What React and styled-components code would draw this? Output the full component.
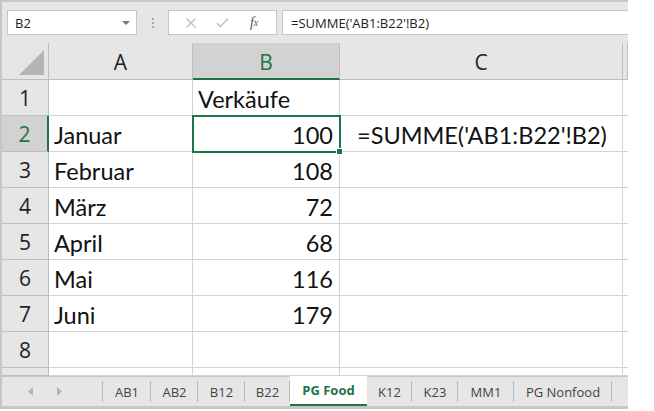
import React from "react";
import styled, { createGlobalStyle, css } from "styled-components";

const Global = createGlobalStyle`
  html, body { margin: 0; padding: 0; background: #ffffff; }
  body { width: 654px; height: 411px; overflow: hidden; }
`;

const GREEN = "#217346";
const GRID = "#d4d4d4";
const UI = `"Open Sans", "Noto Sans", "Liberation Sans", sans-serif`;
const CELL = `Lato, "Liberation Sans", sans-serif`;

const Page = styled.div`
  display: flex;
  width: 654px;
  height: 411px;
  background: #fff;
`;

const Frame = styled.div`
  width: 626px;
  height: 405px;
  border: 2px solid #c6c6c6;
  border-right: none;
  display: flex;
  flex-direction: column;
  background: #fff;
  overflow: hidden;
`;

const Toolbar = styled.div`
  height: 41px;
  flex: none;
  background: #e6e6e6;
  display: flex;
  align-items: flex-start;
  padding: 8px 0 0 5px;
  box-sizing: border-box;
  font-family: ${UI};
`;

const NameBox = styled.div`
  width: 130px;
  height: 25px;
  box-sizing: border-box;
  background: #fff;
  border: 1px solid #c6c6c6;
  display: flex;
  align-items: center;
  justify-content: space-between;
  padding: 0 6px 0 7px;
  font-size: 13px;
  color: #222;
`;

const Caret = styled.span`
  width: 0;
  height: 0;
  border-left: 4px solid transparent;
  border-right: 4px solid transparent;
  border-top: 4px solid #777;
  margin-top: 1px;
`;

const Dots = styled.div`
  width: 31px;
  height: 25px;
  display: flex;
  flex-direction: column;
  align-items: center;
  justify-content: center;
  gap: 2px;
  & > i {
    width: 2px;
    height: 2px;
    background: #a6a6a6;
    display: block;
  }
`;

const FxBox = styled.div`
  width: 109px;
  height: 25px;
  box-sizing: border-box;
  background: #fff;
  border: 1px solid #c6c6c6;
  display: flex;
  align-items: center;
  justify-content: space-around;
  padding: 0 6px;
  margin-right: 5px;
`;

const FxItem = styled.span`
  width: 22px;
  display: flex;
  justify-content: center;
  align-items: center;
  color: ${p => (p.$dark ? "#555" : "#bdbdbd")};
  font-family: ${p => (p.$serif ? `"Liberation Serif", serif` : UI)};
  font-style: ${p => (p.$serif ? "italic" : "normal")};
  font-size: ${p => (p.$serif ? "14px" : "13px")};
`;

const Sub = styled.span`
  font-size: 10px;
`;

const Formula = styled.div`
  flex: 1;
  height: 25px;
  box-sizing: border-box;
  background: #fff;
  border: 1px solid #c6c6c6;
  border-right: none;
  display: flex;
  align-items: center;
  padding-left: 8px;
  font-size: 13px;
  color: #222;
  white-space: nowrap;
`;

const Grid = styled.div`
  flex: none;
  display: grid;
  grid-template-columns: 47px 144px 147px 283px 5px;
  grid-template-rows: 37px repeat(8, 36px) 8px;
  font-family: ${CELL};
`;

const Corner = styled.div`
  background: #e6e6e6;
  border-right: 1px solid #bdbdbd;
  border-bottom: 1px solid #bdbdbd;
  position: relative;
  &::after {
    content: "";
    position: absolute;
    right: 4px;
    bottom: 4px;
    width: 0;
    height: 0;
    border-left: 25px solid transparent;
    border-bottom: 25px solid #b4b4b4;
  }
`;

const ColHead = styled.div`
  background: ${p => (p.$sel ? "#d2d2d2" : "#e6e6e6")};
  color: ${p => (p.$sel ? GREEN : "#222")};
  border-right: 1px solid #bdbdbd;
  border-bottom: ${p => (p.$sel ? `2px solid ${GREEN}` : "1px solid #bdbdbd")};
  display: flex;
  align-items: center;
  justify-content: center;
  font-family: ${UI};
  font-size: 21px;
  padding-top: 2px;
  box-sizing: border-box;
`;

const RowHead = styled.div`
  background: ${p => (p.$sel ? "#d2d2d2" : "#e6e6e6")};
  color: ${p => (p.$sel ? GREEN : "#222")};
  border-right: ${p => (p.$sel ? `2px solid ${GREEN}` : "1px solid #bdbdbd")};
  border-bottom: 1px solid #bdbdbd;
  display: flex;
  align-items: center;
  justify-content: center;
  font-family: ${UI};
  font-size: 21px;
  box-sizing: border-box;
`;

const Cell = styled.div`
  border-right: 1px solid ${GRID};
  border-bottom: 1px solid ${GRID};
  display: flex;
  align-items: center;
  justify-content: ${p => (p.$num ? "flex-end" : "flex-start")};
  padding: 2px 6px 0 ${p => (p.$indent ? 17 : 5)}px;
  font-size: 23.5px;
  color: #111;
  white-space: nowrap;
  box-sizing: border-box;
  position: relative;
  ${p =>
    p.$active &&
    css`
      outline: 2px solid ${GREEN};
      outline-offset: -1px;
      z-index: 1;
    `}
`;

const Handle = styled.span`
  position: absolute;
  right: -4px;
  bottom: -4px;
  width: 5px;
  height: 5px;
  background: ${GREEN};
  border: 1px solid #fff;
`;

const TabBar = styled.div`
  flex: 1;
  display: flex;
  align-items: stretch;
  background: #e6e6e6;
  border-top: 1px solid #c6c6c6;
  border-bottom: 1px solid #c6c6c6;
  font-family: ${UI};
  font-size: 13px;
  color: #444;
`;

const Nav = styled.div`
  width: 101px;
  display: flex;
  align-items: center;
  padding-left: 26px;
  gap: 22px;
  box-sizing: border-box;
  border-right: 1px solid #b8b8b8;
  margin: 4px 0;
  & svg { display: block; }
`;

const Tab = styled.div`
  display: flex;
  align-items: center;
  justify-content: center;
  width: ${p => p.$w}px;
  box-sizing: border-box;
  ${p =>
    p.$active
      ? css`
          background: #fff;
          color: ${GREEN};
          font-weight: 700;
          margin-top: -1px;
          border-bottom: 2px solid ${GREEN};
        `
      : css`
          position: relative;
          &::after {
            content: "";
            position: absolute;
            right: 0;
            top: 4px;
            bottom: 4px;
            width: 1px;
            background: #b8b8b8;
          }
        `}
`;

const tabs = [
  ["AB1", 48],
  ["AB2", 47],
  ["B12", 47],
  ["B22", 45],
  ["PG Food", 77, true],
  ["K12", 45],
  ["K23", 46],
  ["MM1", 56],
  ["PG Nonfood", 98],
];

const rows = [
  ["", "Verkäufe", ""],
  ["Januar", "100", "=SUMME('AB1:B22'!B2)"],
  ["Februar", "108", ""],
  ["März", "72", ""],
  ["April", "68", ""],
  ["Mai", "116", ""],
  ["Juni", "179", ""],
  ["", "", ""],
];

export default function App() {
  return (
    <>
      <Global />
      <Page>
        <Frame>
          <Toolbar>
            <NameBox>
              <span>B2</span>
              <Caret />
            </NameBox>
            <Dots>
              <i />
              <i />
              <i />
            </Dots>
            <FxBox>
              <FxItem>
                <svg width="12" height="12" viewBox="0 0 12 12">
                  <path d="M1.5 1.5 L10.5 10.5 M10.5 1.5 L1.5 10.5" stroke="#bdbdbd" strokeWidth="1.3" fill="none" />
                </svg>
              </FxItem>
              <FxItem>
                <svg width="13" height="11" viewBox="0 0 13 11">
                  <path d="M1 6 L4.5 9.5 L12 1.5" stroke="#bdbdbd" strokeWidth="1.4" fill="none" />
                </svg>
              </FxItem>
              <FxItem $serif $dark>
                f<Sub>x</Sub>
              </FxItem>
            </FxBox>
            <Formula>=SUMME('AB1:B22'!B2)</Formula>
          </Toolbar>
          <Grid>
            <Corner />
            <ColHead>A</ColHead>
            <ColHead $sel>B</ColHead>
            <ColHead>C</ColHead>
            <ColHead />
            {rows.map((r, i) => {
              const isNum = i > 0 && r[1] !== "";
              return (
                <React.Fragment key={i}>
                  <RowHead $sel={i === 1}>{i + 1}</RowHead>
                  <Cell>{r[0]}</Cell>
                  <Cell $num={isNum} $active={i === 1}>
                    {r[1]}
                    {i === 1 && <Handle />}
                  </Cell>
                  <Cell $indent={!!r[2]}>{r[2]}</Cell>
                  <Cell />
                </React.Fragment>
              );
            })}
            <RowHead />
            <Cell />
            <Cell />
            <Cell />
            <Cell />
          </Grid>
          <TabBar>
            <Nav>
              <svg width="6" height="9" viewBox="0 0 6 9">
                <path d="M5 0 L0 4.5 L5 9 Z" fill="#b5b5b5" />
              </svg>
              <svg width="6" height="9" viewBox="0 0 6 9">
                <path d="M1 0 L6 4.5 L1 9 Z" fill="#b5b5b5" />
              </svg>
            </Nav>
            {tabs.map(([t, w, a]) => (
              <Tab key={t} $w={w} $active={a}>
                {t}
              </Tab>
            ))}
          </TabBar>
        </Frame>
      </Page>
    </>
  );
}
